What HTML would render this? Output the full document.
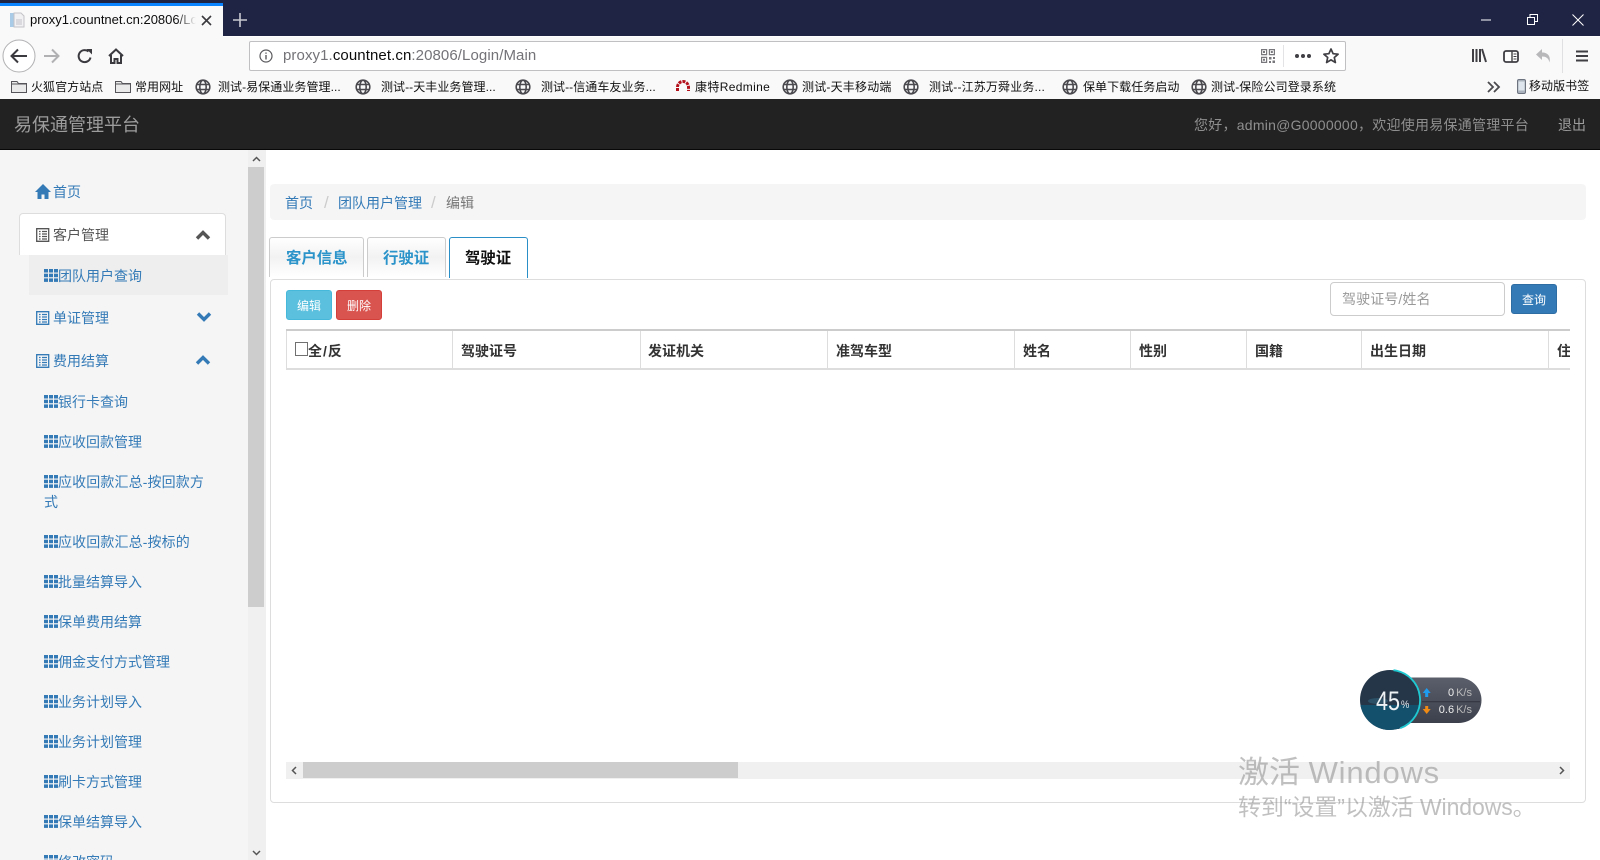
<!DOCTYPE html>
<html lang="zh-CN"><head><meta charset="utf-8"><title>易保通管理平台</title>
<style>
*{box-sizing:border-box}
html,body{margin:0;padding:0;width:1600px;height:860px;overflow:hidden;background:#fff}
body{position:relative;font-family:"Liberation Sans","Noto Sans CJK SC",sans-serif;font-size:14px;color:#333}
.a{position:absolute}
.t{position:absolute;white-space:nowrap;line-height:20px}
svg{position:absolute;overflow:visible}
.bm{font-size:12px;color:#111;letter-spacing:.06px}
.l{color:#337ab7;font-size:14px}
.th{font-weight:bold;color:#333;font-size:14px;top:341px}
.vl{position:absolute;top:331px;height:37px;width:1px;background:#ddd}
</style></head><body>
<svg width="0" height="0" style="position:absolute"><defs>
<g id="grid" fill="#337ab7"><rect x="0" y="0" width="4" height="3.5"/><rect x="5" y="0" width="4" height="3.5"/><rect x="10" y="0" width="4" height="3.5"/><rect x="0" y="4.7" width="4" height="3.5"/><rect x="5" y="4.7" width="4" height="3.5"/><rect x="10" y="4.7" width="4" height="3.5"/><rect x="0" y="9.4" width="4" height="3.5"/><rect x="5" y="9.4" width="4" height="3.5"/><rect x="10" y="9.4" width="4" height="3.5"/></g>
<g id="list"><path d="M.7.7h12v12.6H.7zM3 3.5h1.6M6 3.5h5M3 6h1.6M6 6h5M3 8.5h1.6M6 8.5h5M3 11h1.6M6 11h5" fill="none" stroke="currentColor" stroke-width="1.3"/></g>
<g id="up"><path d="M1 8.5L7 2.5l6 6" fill="none" stroke="currentColor" stroke-width="3.4"/></g>
<g id="down"><path d="M1 1.5L7 7.5l6-6" fill="none" stroke="currentColor" stroke-width="3.4"/></g>
<g id="globe" fill="none" stroke="#4a4a4f" stroke-width="1.6"><circle cx="8" cy="8" r="6.8"/><ellipse cx="8" cy="8" rx="3.2" ry="6.8"/><path d="M1.5 5.5h13M1.5 10.5h13"/></g>
<g id="folder"><path d="M.5 13.5V2.5h5.5l1.5 2h8v9z" fill="#eaeaea" stroke="#55555a"/><path d="M.5 5h15" stroke="#55555a"/></g>
</defs></svg>

<!-- title bar -->
<div class="a" style="left:0;top:0;width:1600px;height:36px;background:#1f2444"></div>
<div class="a" style="left:0;top:3px;width:223px;height:34px;background:#f9f9fa"></div>
<div class="a" style="left:0;top:3px;width:223px;height:3px;background:#0a84ff"></div>
<svg style="left:9px;top:12px" width="16" height="16"><path d="M1 1h4v14H1z" fill="#a9cbe8"/><path d="M5 1h7l3 3v11H5z" fill="#f1f1f3" stroke="#c4c4c8"/><path d="M7 8h6M7 10h6M7 12h6" stroke="#c4c4c8"/></svg>
<div class="t" style="left:30px;top:10px;width:166px;overflow:hidden;font-size:13px;color:#0c0c0d">proxy1.countnet.cn:20806/Login/Main</div>
<div class="a" style="left:176px;top:8px;width:20px;height:24px;background:linear-gradient(90deg,rgba(249,249,250,0),#f9f9fa)"></div>
<svg style="left:201px;top:15px" width="11" height="11"><path d="M1 1l9 9M10 1l-9 9" stroke="#3a3a3f" stroke-width="1.6"/></svg>
<svg style="left:233px;top:13px" width="14" height="14"><path d="M7 0v14M0 7h14" stroke="#c9cad2" stroke-width="1.6"/></svg>
<svg style="left:1481px;top:19px" width="10" height="2"><path d="M0 1h10" stroke="#fff"/></svg>
<svg style="left:1527px;top:14px" width="11" height="11"><path d="M.5 3.500h7v7h-7zM3 3.500v-3h7.500v7H7.500" fill="none" stroke="#fff"/></svg>
<svg style="left:1572px;top:14px" width="12" height="12"><path d="M.5.5l11 11M11.500.5l-11 11" stroke="#fff"/></svg>

<!-- toolbar -->
<div class="a" style="left:0;top:37px;width:1600px;height:62px;background:#f9f9fa"></div>
<svg style="left:2px;top:39px" width="34" height="34"><circle cx="17" cy="17" r="16" fill="#fff" stroke="#b1b1b3"/><path d="M25 17H10M16 10.500L9.500 17l6.500 6.500" fill="none" stroke="#3a3a3f" stroke-width="2"/></svg>
<svg style="left:44px;top:48px" width="16" height="16"><path d="M0 8h14M8 1.500L14.500 8 8 14.500" fill="none" stroke="#b1b1b3" stroke-width="2"/></svg>
<svg style="left:77px;top:48px" width="16" height="16"><path d="M13.500 9.500A6 6 0 1 1 11.500 3.500" fill="none" stroke="#3a3a3f" stroke-width="2"/><path d="M9.500 1h5.500v5.500z" fill="#3a3a3f"/></svg>
<svg style="left:108px;top:48px" width="16" height="16"><path d="M1 8l7-6.500L15 8M3 7v8h3.500v-4h3v4H13V7" fill="none" stroke="#3a3a3f" stroke-width="2"/></svg>

<div class="a" style="left:249px;top:41px;width:1097px;height:30px;background:#fff;border:1px solid #c0c0c2;border-radius:2px"></div>
<svg style="left:259px;top:49px" width="14" height="14"><circle cx="7" cy="7" r="6" fill="none" stroke="#5a5a5e" stroke-width="1.2"/><path d="M7 6v4.500M7 3.500v1.300" stroke="#5a5a5e" stroke-width="1.400"/></svg>
<div class="t" style="left:283px;top:46px;font-size:15px;letter-spacing:.09px;color:#737378">proxy1.<span style="color:#0c0c0d">countnet.cn</span>:20806/Login/Main</div>
<svg style="left:1261px;top:49px" width="14" height="14" fill="none" stroke="#77777c" stroke-width="1.200"><path d="M.6.6h5v5h-5zM8.400.6h5v5h-5zM.6 8.400h5v5h-5z"/><path d="M2 2h2v2H2zM9.800 2h2v2h-2zM2 9.800h2v2H2z" fill="#77777c" stroke="none"/><path d="M8 8h2.500v2.500H8zM11.500 11.500h2.500v2.500h-2.500zM8 12h2v2H8zM12 8h2v2h-2z" fill="#77777c" stroke="none"/></svg>
<div class="a" style="left:1283px;top:45px;width:1px;height:22px;background:#e3e3e5"></div>
<svg style="left:1295px;top:54px" width="16" height="4" fill="#3f3f44"><circle cx="2" cy="2" r="2"/><circle cx="8" cy="2" r="2"/><circle cx="14" cy="2" r="2"/></svg>
<svg style="left:1323px;top:48px" width="16" height="16"><path d="M8 1l2.100 4.700 5 .5-3.800 3.300 1.100 5L8 11.900l-4.400 2.600 1.100-5L.9 6.200l5-.5z" fill="none" stroke="#3f3f44" stroke-width="1.700" stroke-linejoin="round"/></svg>
<svg style="left:1472px;top:49px" width="15" height="13"><path d="M1 0v13M4.500 0v13M8 0v13M10 0l4 13" stroke="#3f3f44" stroke-width="2"/></svg>
<svg style="left:1503px;top:50px" width="16" height="13"><rect x="1" y="1" width="14" height="11" rx="2" fill="#fff" stroke="#3f3f44" stroke-width="1.800"/><path d="M9 1v11" stroke="#3f3f44" stroke-width="1.400"/><path d="M10.500 4h3M10.500 6.500h3M10.500 9h3" stroke="#3f3f44"/></svg>
<svg style="left:1536px;top:49px" width="15" height="14"><path d="M6 0L0 5.500 6 11V7.500c4 0 6.500 1.500 7.500 6 1.500-6-1.500-10-7.500-10z" fill="#b8b8bb"/></svg>
<div class="a" style="left:1562px;top:39px;width:1px;height:34px;background:#e0e0e2"></div>
<svg style="left:1576px;top:50px" width="12" height="12"><path d="M0 1.500h12M0 6h12M0 10.500h12" stroke="#3f3f44" stroke-width="2"/></svg>

<!-- bookmarks -->
<svg style="left:11px;top:79px" width="16" height="16"><use href="#folder"/></svg><div class="t bm" style="left:31px;top:77px">火狐官方站点</div>
<svg style="left:115px;top:79px" width="16" height="16"><use href="#folder"/></svg><div class="t bm" style="left:135px;top:77px">常用网址</div>
<svg style="left:195px;top:79px" width="16" height="16"><use href="#globe"/></svg><div class="t bm" style="left:218px;top:77px">测试-易保通业务管理...</div>
<svg style="left:355px;top:79px" width="16" height="16"><use href="#globe"/></svg><div class="t bm" style="left:381px;top:77px">测试--天丰业务管理...</div>
<svg style="left:515px;top:79px" width="16" height="16"><use href="#globe"/></svg><div class="t bm" style="left:541px;top:77px">测试--信通车友业务...</div>
<svg style="left:675px;top:79px" width="16" height="13"><path d="M2.500 12V8A5.500 5.500 0 0 1 13.500 8V12" fill="none" stroke="#b3121d" stroke-width="3" stroke-dasharray="3 1"/></svg><div class="t bm" style="left:695px;top:77px;letter-spacing:.35px">康特Redmine</div>
<svg style="left:782px;top:79px" width="16" height="16"><use href="#globe"/></svg><div class="t bm" style="left:802px;top:77px;letter-spacing:.2px">测试-天丰移动端</div>
<svg style="left:903px;top:79px" width="16" height="16"><use href="#globe"/></svg><div class="t bm" style="left:929px;top:77px;letter-spacing:.15px">测试--江苏万舜业务...</div>
<svg style="left:1062px;top:79px" width="16" height="16"><use href="#globe"/></svg><div class="t bm" style="left:1083px;top:77px">保单下载任务启动</div>
<svg style="left:1191px;top:79px" width="16" height="16"><use href="#globe"/></svg><div class="t bm" style="left:1211px;top:77px;letter-spacing:.1px">测试-保险公司登录系统</div>
<svg style="left:1487px;top:81px" width="13" height="12"><path d="M1 1l5 5-5 5M7 1l5 5-5 5" fill="none" stroke="#4a4a4f" stroke-width="1.800"/></svg>
<svg style="left:1517px;top:79px" width="9" height="15"><rect x=".5" y=".5" width="8" height="14" rx="1.500" fill="#aab2bd" stroke="#6d7480"/><rect x="1.500" y="2.500" width="6" height="9" fill="#dfe5ec"/></svg>
<div class="t bm" style="left:1529px;top:76px">移动版书签</div>

<!-- header -->
<div class="a" style="left:0;top:99px;width:1600px;height:51px;background:#222;border-bottom:1px solid #080808"></div>
<div class="t" style="left:14px;top:115px;font-size:18px;color:#9d9d9d">易保通管理平台</div>
<div class="t" style="left:1194px;top:115px;letter-spacing:.25px;color:#8f8f8f">您好，admin@G0000000，欢迎使用易保通管理平台</div>
<div class="t" style="left:1558px;top:115px;color:#9d9d9d">退出</div>

<!-- sidebar -->
<div class="a" style="left:0;top:150px;width:248px;height:710px;background:#f5f5f5"></div>
<div class="a" style="left:248px;top:150px;width:18px;height:710px;background:#f0f0f0"></div>
<div class="a" style="left:248px;top:167px;width:16px;height:440px;background:#cdcdcd"></div>
<svg style="left:252px;top:156px" width="9" height="6"><path d="M1 5l3.500-3.500L8 5" fill="none" stroke="#555" stroke-width="1.500"/></svg>
<svg style="left:252px;top:850px" width="9" height="6"><path d="M1 1l3.500 3.500L8 1" fill="none" stroke="#555" stroke-width="1.500"/></svg>

<svg style="left:35px;top:184px" width="16" height="15"><path d="M8 0L0 8h2.500v7h4v-4.500h3V15h4V8H16z" fill="#337ab7"/></svg>
<div class="t l" style="left:53px;top:182px">首页</div>

<div class="a" style="left:19px;top:213px;width:207px;height:42px;background:#fff;border:1px solid #ddd;border-bottom:0;border-radius:4px 4px 0 0"></div>
<svg style="left:36px;top:228px;color:#555" width="14" height="14"><use href="#list"/></svg>
<div class="t" style="left:53px;top:225px;color:#555">客户管理</div>
<svg style="left:196px;top:230px;color:#555" width="14" height="10"><use href="#up"/></svg>

<div class="a" style="left:29px;top:255px;width:199px;height:40px;background:#eee"></div>
<svg style="left:44px;top:269px" width="14" height="13"><use href="#grid"/></svg>
<div class="t l" style="left:58px;top:266px">团队用户查询</div>

<svg style="left:36px;top:311px;color:#337ab7" width="14" height="14"><use href="#list"/></svg>
<div class="t l" style="left:53px;top:308px">单证管理</div>
<svg style="left:197px;top:312px;color:#337ab7" width="14" height="10"><use href="#down"/></svg>

<svg style="left:36px;top:354px;color:#337ab7" width="14" height="14"><use href="#list"/></svg>
<div class="t l" style="left:53px;top:351px">费用结算</div>
<svg style="left:196px;top:355px;color:#337ab7" width="14" height="10"><use href="#up"/></svg>

<svg style="left:44px;top:395px" width="14" height="13"><use href="#grid"/></svg><div class="t l" style="left:58px;top:392px">银行卡查询</div>
<svg style="left:44px;top:435px" width="14" height="13"><use href="#grid"/></svg><div class="t l" style="left:58px;top:432px">应收回款管理</div>
<svg style="left:44px;top:475px" width="14" height="13"><use href="#grid"/></svg><div class="t l" style="left:58px;top:472px;letter-spacing:.12px">应收回款汇总-按回款方</div><div class="t l" style="left:44px;top:492px">式</div>
<svg style="left:44px;top:535px" width="14" height="13"><use href="#grid"/></svg><div class="t l" style="left:58px;top:532px;letter-spacing:.12px">应收回款汇总-按标的</div>
<svg style="left:44px;top:575px" width="14" height="13"><use href="#grid"/></svg><div class="t l" style="left:58px;top:572px">批量结算导入</div>
<svg style="left:44px;top:615px" width="14" height="13"><use href="#grid"/></svg><div class="t l" style="left:58px;top:612px">保单费用结算</div>
<svg style="left:44px;top:655px" width="14" height="13"><use href="#grid"/></svg><div class="t l" style="left:58px;top:652px">佣金支付方式管理</div>
<svg style="left:44px;top:695px" width="14" height="13"><use href="#grid"/></svg><div class="t l" style="left:58px;top:692px">业务计划导入</div>
<svg style="left:44px;top:735px" width="14" height="13"><use href="#grid"/></svg><div class="t l" style="left:58px;top:732px">业务计划管理</div>
<svg style="left:44px;top:775px" width="14" height="13"><use href="#grid"/></svg><div class="t l" style="left:58px;top:772px">刷卡方式管理</div>
<svg style="left:44px;top:815px" width="14" height="13"><use href="#grid"/></svg><div class="t l" style="left:58px;top:812px">保单结算导入</div>
<svg style="left:44px;top:855px" width="14" height="13"><use href="#grid"/></svg><div class="t l" style="left:58px;top:852px">修改密码</div>

<!-- breadcrumb -->
<div class="a" style="left:270px;top:184px;width:1316px;height:36px;background:#f5f5f5;border-radius:4px"></div>
<div class="t l" style="left:285px;top:193px">首页</div>
<div class="t" style="left:324px;top:193px;color:#ccc;font-size:17px">/</div>
<div class="t l" style="left:338px;top:193px">团队用户管理</div>
<div class="t" style="left:431px;top:193px;color:#ccc;font-size:17px">/</div>
<div class="t" style="left:446px;top:193px;color:#777">编辑</div>

<!-- tabs -->
<div class="a" style="left:269px;top:237px;width:95px;height:40px;border:1px solid #ccc;border-bottom:0;border-radius:3px 3px 0 0;background:linear-gradient(#fff,#f2f2f2 50%,#fff)"></div>
<div class="a" style="left:367px;top:237px;width:79px;height:40px;border:1px solid #ccc;border-bottom:0;border-radius:3px 3px 0 0;background:linear-gradient(#fff,#f2f2f2 50%,#fff)"></div>
<div class="a" style="left:449px;top:237px;width:79px;height:41px;border:1px solid #2a8fc6;border-bottom:0;border-radius:3px 3px 0 0;background:#fff"></div>
<div class="t" style="left:286px;top:249px;font-size:15.4px;font-weight:bold;color:#2a93c9">客户信息</div>
<div class="t" style="left:383px;top:249px;font-size:15.4px;font-weight:bold;color:#2a93c9">行驶证</div>
<div class="t" style="left:465px;top:249px;font-size:15.4px;font-weight:bold;color:#111">驾驶证</div>

<!-- panel -->
<div class="a" style="left:270px;top:279px;width:1316px;height:524px;border:1px solid #ddd;border-radius:4px;background:#fff"></div>
<div class="a" style="left:286px;top:290px;width:46px;height:30px;background:#5bc0de;border:1px solid #46b8da;border-radius:3px;color:#fff;font-size:12px;line-height:30px;text-align:center">编辑</div>
<div class="a" style="left:336px;top:290px;width:46px;height:30px;background:#d9534f;border:1px solid #d43f3a;border-radius:3px;color:#fff;font-size:12px;line-height:30px;text-align:center">删除</div>
<div class="a" style="left:1330px;top:282px;width:175px;height:34px;border:1px solid #ccc;border-radius:4px;background:#fff"></div>
<div class="t" style="left:1342px;top:289px;color:#999;letter-spacing:.1px">驾驶证号/姓名</div>
<div class="a" style="left:1511px;top:284px;width:46px;height:30px;background:#337ab7;border:1px solid #2e6da4;border-radius:3px;color:#fff;font-size:12px;line-height:30px;text-align:center">查询</div>

<!-- table -->
<div class="a" style="left:286px;top:329px;width:1284px;height:2px;background:#ccc"></div>
<div class="a" style="left:286px;top:368px;width:1284px;height:2px;background:#ddd"></div>
<div class="vl" style="left:286px"></div><div class="vl" style="left:452px"></div><div class="vl" style="left:640px"></div><div class="vl" style="left:827px"></div><div class="vl" style="left:1014px"></div><div class="vl" style="left:1130px"></div><div class="vl" style="left:1246px"></div><div class="vl" style="left:1361px"></div><div class="vl" style="left:1548px"></div>
<div class="a" style="left:295px;top:342px;width:13px;height:14px;border:1px solid #707070;background:#fff"></div>
<div class="t th" style="left:308px;letter-spacing:1px">全/反</div>
<div class="t th" style="left:461px">驾驶证号</div>
<div class="t th" style="left:648px">发证机关</div>
<div class="t th" style="left:836px">准驾车型</div>
<div class="t th" style="left:1023px">姓名</div>
<div class="t th" style="left:1139px">性别</div>
<div class="t th" style="left:1255px">国籍</div>
<div class="t th" style="left:1370px">出生日期</div>
<div class="t th" style="left:1557px;width:13px;overflow:hidden">住址</div>

<!-- h scrollbar -->
<div class="a" style="left:286px;top:762px;width:1284px;height:17px;background:#f0f0f0"></div>
<div class="a" style="left:303px;top:762px;width:435px;height:16px;background:#cdcdcd"></div>
<svg style="left:291px;top:766px" width="6" height="9"><path d="M5 1L1.500 4.500 5 8" fill="none" stroke="#555" stroke-width="1.500"/></svg>
<svg style="left:1559px;top:766px" width="6" height="9"><path d="M1 1l3.500 3.500L1 8" fill="none" stroke="#555" stroke-width="1.500"/></svg>

<!-- speed widget -->
<svg style="left:1355px;top:666px" width="130" height="64">
<defs><linearGradient id="p" x1="0" y1="0" x2="0" y2="1"><stop offset="0" stop-color="#5b5f6b"/><stop offset="1" stop-color="#3c404c"/></linearGradient><clipPath id="c"><circle cx="35" cy="34" r="30"/></clipPath></defs>
<path d="M35 11.500H103.750a22.750 22.750 0 0 1 0 45.500H35z" fill="url(#p)"/>
<path d="M67 35.700h58" stroke="#2f323c"/>
<circle cx="35" cy="34" r="30" fill="#243648"/>
<g clip-path="url(#c)"><rect x="0" y="39" width="70" height="30" fill="#13506c"/><ellipse cx="23" cy="35" rx="10" ry="3" fill="#2c5166"/></g>
<path d="M38.500 4.200A30 30 0 0 1 45.300 62.200" fill="none" stroke="#1fc9d2" stroke-width="1.800"/>
<path d="M67.700 27l4-5 4 5h-2.500v4h-3v-4z" fill="#1e9df0"/>
<path d="M67.700 43l4 5 4-5h-2.500v-3h-3v3z" fill="#f08a14"/>
</svg>
<div class="t" style="left:1376px;top:691px;font-size:27px;color:#eef2f5;transform:scaleX(.8);transform-origin:left">45</div>
<div class="t" style="left:1401px;top:695px;font-size:11px;color:#e3e8ec;transform:scaleX(.85);transform-origin:left">%</div>
<div class="t" style="left:1430px;top:683px;width:42px;text-align:right;font-size:11px;color:#eee">0<span style="color:#bbb;margin-left:2px">K/s</span></div>
<div class="t" style="left:1430px;top:700px;width:42px;text-align:right;font-size:11px;color:#eee">0.6<span style="color:#bbb;margin-left:2px">K/s</span></div>

<!-- watermark -->
<div class="t" style="left:1238px;top:755px;line-height:36px;font-size:31px;color:rgba(140,140,140,.55)">激活 <span style="letter-spacing:.8px">Windows</span></div>
<div class="t" style="left:1238px;top:792px;line-height:30px;font-size:23px;letter-spacing:-.08px;color:rgba(140,140,140,.55)">转到“设置”以激活 Windows。</div>
</body></html>
